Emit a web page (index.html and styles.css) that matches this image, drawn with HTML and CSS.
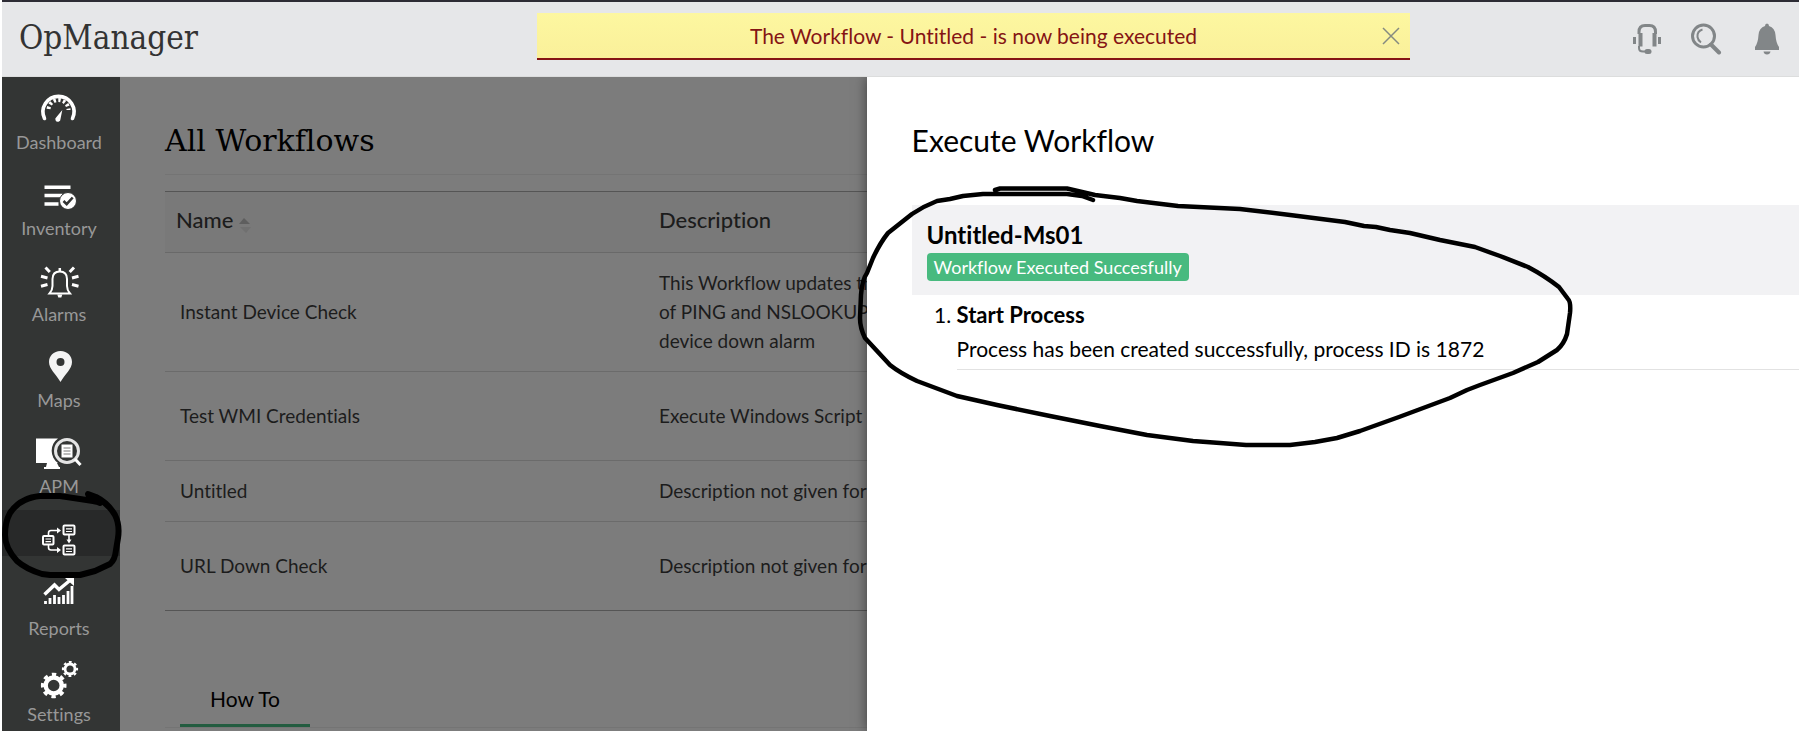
FILE: index.html
```html
<!DOCTYPE html>
<html lang="en">
<head>
<meta charset="utf-8">
<title>OpManager - All Workflows</title>
<link rel="stylesheet" href="styles.css">
</head>
<body>
<div class="app">
  <header class="topbar">
    <div class="brand">OpManager</div>
    <div class="toast" role="status">
      <span class="toast-text">The Workflow - Untitled - is now being executed</span>
      <button class="toast-close" aria-label="Close">
        <svg width="18" height="18" viewBox="0 0 18 18" fill="none" stroke="#858a80" stroke-width="1.5"><path d="M1 1 17 17M17 1 1 17"/></svg>
      </button>
    </div>
    <div class="tools">
      <button class="tool" aria-label="Support">
        <svg width="32" height="32" viewBox="0 0 32 32" fill="none" stroke="#828688">
          <path d="M10 11V9Q10 2.500 16 2.500H20.500Q26.500 2.500 26.500 9v2" stroke-width="3"/>
          <path d="M11.500 10v13.500M25.500 10v13.500" stroke-width="4"/>
          <path d="M5.500 14v7M30.500 14v7" stroke-width="3"/>
          <path d="M10 23v2q0 3.500 4 3.500h4" stroke-width="2"/>
          <path d="M18 28.500h2" stroke-width="5" stroke-linecap="round"/>
        </svg>
      </button>
      <button class="tool" aria-label="Search">
        <svg width="32" height="32" viewBox="0 0 32 32" fill="none" stroke="#828688">
          <circle cx="13.500" cy="13" r="11" stroke-width="3"/>
          <path d="M12.500 6.500Q7 8 7.500 14q.5 3.500 3.500 5.500" stroke-width="2"/>
          <path d="M21 21.500 29 29.500" stroke-width="4" stroke-linecap="round"/>
        </svg>
      </button>
      <button class="tool" aria-label="Notifications">
        <svg width="32" height="32" viewBox="0 0 32 32" fill="#828688">
          <path d="M14 3q0-2.500 2-2.500T18 3q6 2 6.500 9 .5 8 3.500 12v3H4v-3q3-4 3.500-12Q8 5 14 3ZM12.500 28.500h7q-.5 3-3.500 3t-3.500-3Z"/>
        </svg>
      </button>
    </div>
  </header>

  <div class="body">
    <nav class="sidebar">
      <a class="nav-item" href="#">
        <svg class="nav-icon" viewBox="0 0 48 44" fill="none" stroke="#fff">
          <path d="M9.500 32.500A15.500 15.500 0 1 1 37.500 32.500" stroke-width="3.600" stroke-linecap="round"/>
          <path d="M13.500 24A10 10 0 0 1 33.500 24" stroke-width="4" stroke-dasharray="2.400 2.400" stroke-dashoffset="-1"/>
          <path d="M27.300 24 21.500 31a2.600 2.600 0 1 0 4 2Z" fill="#fff" stroke="none"/>
        </svg>
        <span>Dashboard</span>
      </a>
      <a class="nav-item" href="#">
        <svg class="nav-icon" viewBox="0 0 48 44" fill="none" stroke="#fff">
          <path d="M9.500 15.300h26M9.500 23.500h18M9.500 32h14" stroke-width="3.500"/>
          <circle cx="33" cy="29" r="8.500" fill="#fff" stroke="#333534" stroke-width="1"/>
          <path d="m28.500 29 3.200 3.200 6-6.700" stroke="#333534" stroke-width="2.600"/>
        </svg>
        <span>Inventory</span>
      </a>
      <a class="nav-item" href="#">
        <svg class="nav-icon" viewBox="0 0 48 44" fill="none" stroke="#fff">
          <path d="M14.500 35.500h20.500Q32 32 32 28v-7q0-7.500-7.200-7.500T17.500 21v7q0 4-3 7.500Z" stroke-width="2"/>
          <path d="M24.800 10v4" stroke-width="2.500"/><path d="M22.300 36.500h5l-1 3h-3Z" fill="#fff" stroke="none"/>
          <path d="m10.500 9.500 4.300 4.500M6 18.300l6.500 1.700M6 28.200l6.500-1.700M39 9.500 34.700 14M43.500 18.300 37 20M43.500 28.200 37 26.500" stroke-width="3"/>
        </svg>
        <span>Alarms</span>
      </a>
      <a class="nav-item" href="#">
        <svg class="nav-icon" viewBox="0 0 48 44" fill="#f4f4f4">
          <path fill-rule="evenodd" d="M25.500 7C18.500 7 14 12 14 18c0 7 7 12 11.500 20C30 30 37 25 37 18c0-6-4.500-11-11.500-11Zm0 7a4 4 0 1 1 0 8 4 4 0 0 1 0-8Z"/>
        </svg>
        <span>Maps</span>
      </a>
      <a class="nav-item" href="#">
        <svg class="nav-icon" viewBox="0 0 48 44" fill="none" stroke="#fff">
          <path d="M1 8.500h22a15 15 0 0 0 0 24.500l-1 0 2 4h1v2H9v-2h2l1-4H1Z" fill="#fff" stroke="none"/>
          <circle cx="32" cy="21" r="11.500" fill="#333534" stroke="#e4e4e4" stroke-width="3"/>
          <path d="m40 29 5.500 6" stroke-width="3"/>
          <path d="M26.500 14.500h11v13h-11Z" fill="#fff" stroke="none"/>
          <path d="M28.500 18h7M28.500 21h7M28.500 24h7" stroke="#777" stroke-width="1"/>
        </svg>
        <span>APM</span>
      </a>
      <a class="nav-item nav-item-active" href="#" aria-label="Workflow">
        <svg class="nav-icon-active" viewBox="0 0 48 46" fill="none" stroke="#fff" stroke-width="2">
          <rect x="28.500" y="15.500" width="11" height="9" rx="1"/><rect x="28.500" y="35.500" width="11" height="9" rx="1"/><rect x="8" y="26" width="10.500" height="8.500" rx="1"/>
          <path d="M31 18.800h6M31 21.500h6M31 38.800h6M31 41.500h6M10.500 29h5.500M10.500 31.700h5.500" stroke-width="1.200"/>
          <path d="M13.500 26v-3q0-2.500 2.500-2.500h8M13.500 35v2.500q0 2.500 2.500 2.500h8M34 25v6" stroke-width="1.600"/>
          <path d="m22 17.500 4 3-4 3ZM22 37l4 3-4 3ZM31.500 29.500h5L34 33.500Z" fill="#fff" stroke="none"/>
        </svg>
      </a>
      <a class="nav-item" href="#">
        <svg class="nav-icon" viewBox="0 0 48 44" fill="none" stroke="#fff">
          <path d="M9.500 22.500 19.500 13l4.500 4.500L36 7.500" stroke-width="3.500"/><path d="M30 6h9v8Z" fill="#fff" stroke="none"/>
          <path d="M10.500 32v-3M15 32v-6M19.500 32v-9M24 32v-7M28.500 32v-9M33 32v-13M37 32v-18" stroke-width="2.800"/>
        </svg>
        <span>Reports</span>
      </a>
      <a class="nav-item" href="#">
        <svg class="nav-icon" viewBox="0 0 48 44" fill="none" stroke="#fff">
          <circle cx="18.700" cy="27.500" r="8" stroke-width="4.400"/>
          <circle cx="18.700" cy="27.500" r="11" stroke-width="3.600" stroke-dasharray="4.320 4.320" stroke-dashoffset="2.160"/>
          <circle cx="35" cy="11" r="5" stroke-width="2.800"/>
          <circle cx="35" cy="11" r="7" stroke-width="2.200" stroke-dasharray="2.750 2.750" stroke-dashoffset="1.370"/>
        </svg>
        <span>Settings</span>
      </a>
    </nav>

    <main class="content">
      <h1 class="page-title">All Workflows</h1>
      <table class="workflows">
        <thead>
          <tr>
            <th class="col-name">Name <svg class="sort" width="12" height="16" viewBox="0 0 12 16"><path d="M0 7 5 1l6 6Z" fill="#5e5e5e"/><path d="M1 10h11l-5 6Z" fill="#707070"/></svg></th>
            <th>Description</th>
          </tr>
        </thead>
        <tbody>
          <tr class="row-tall"><td>Instant Device Check</td><td>This Workflow updates the<br>of PING and NSLOOKUP<br>device down alarm</td></tr>
          <tr class="row-medium"><td>Test WMI Credentials</td><td>Execute Windows Script</td></tr>
          <tr><td>Untitled</td><td>Description not given for</td></tr>
          <tr class="row-medium"><td>URL Down Check</td><td>Description not given for</td></tr>
        </tbody>
      </table>
      <div class="tabs"><button class="tab">How To</button></div>
    </main>

    <section class="drawer">
      <h2 class="drawer-title">Execute Workflow</h2>
      <div class="result-head">
        <h3 class="result-name">Untitled-Ms01</h3>
        <span class="badge">Workflow Executed Succesfully</span>
      </div>
      <ol class="steps">
        <li><strong class="step-name">Start Process</strong><p class="step-text">Process has been created successfully, process ID is 1872</p></li>
      </ol>
    </section>
  </div>

  <svg class="ink" width="1799" height="731" viewBox="0 0 1799 731" fill="none" stroke="#000" stroke-linecap="round" stroke-linejoin="round">
    <path stroke-width="4.500" d="M995 190 1000 188.500H1067L1095 195 1120 198 1137 201 1178 206 1240 209 1290 215 1345 222 1364 226 1376 227 1390 230 1410 233 1440 240 1475 247 1500 256 1528 267Q1545 276 1559 287L1568 299Q1571 302 1570 313L1567 334Q1564 344 1557 350L1538 362 1513 373 1480 385 1467 390 1450 398 1399 417 1360 431 1337 438 1315 442 1290 445H1246L1220 443 1193 441 1147 435 1100 426 1050 416 997 405 957 396 917 381Q900 373 890 365L865 338Q860 328 860 318L861 295Q862 280 867 273L873 258Q880 243 888 233L912 214Q924 206 937 201L950 199 963 196 983 194H1067L1082 196 1093 200"/>
    <path stroke-width="6" d="M98 502 93 501 80 499 60 496H40Q31 497 25 500 16 504 10 513 5 522 5 535 5 548 17 561 26 569 42 574L50 575H80L95 571 110 564Q115 560 116 550L118 538Q120 525 115 515 108 503 96 497L88 494 90 499 100 503"/>
  </svg>
</div>
</body>
</html>
```

FILE: styles.css
```css
* { box-sizing: border-box; }

body {
  margin: 0;
  background: #fff;
  color: #000;
  font-family: Lato, "Liberation Sans", sans-serif;
  font-variant-ligatures: no-common-ligatures;
}

button {
  border: 0;
  padding: 0;
  background: none;
  font: inherit;
  font-variant-ligatures: inherit;
  cursor: pointer;
}

a { text-decoration: none; }

.app {
  position: relative;
  display: flex;
  flex-direction: column;
  height: 100vh;
  padding-left: 2px;
  overflow: hidden;
}

/* Top bar */
.topbar {
  display: grid;
  grid-template-columns: 535px minmax(0, 1fr) 389px;
  flex: none;
  height: 77px;
  border-top: 2px solid #2d2c35;
  border-bottom: 1px solid #dcdddd;
  background: #e6e7e9;
}

.brand {
  padding: 12px 0 0 17px;
  color: #333;
  font-family: "Roboto Slab", "DejaVu Serif Condensed", "DejaVu Serif", serif;
  font-size: 33px;
  font-weight: 200;
  line-height: 48px;
}

.toast {
  display: flex;
  align-items: center;
  height: 47px;
  margin-top: 11px;
  padding: 0 10px;
  border-bottom: 2px solid #851414;
  background: linear-gradient(#fdf7a0, #faf09a);
  color: #851414;
  font-size: 21px;
}

.toast-text { flex: 1; padding-left: 18px; text-align: center; }
.toast-close { width: 18px; height: 18px; }
.toast-close svg { display: block; }

.tools {
  display: flex;
  justify-content: flex-end;
  gap: 29px;
  padding: 21px 16px 0 0;
}

.tool { width: 32px; height: 32px; }
.tool svg { display: block; }

/* Page body */
.body {
  position: relative;
  display: flex;
  flex: 1;
  min-height: 0;
}

.sidebar {
  display: flex;
  flex: none;
  flex-direction: column;
  width: 118px;
  background: #333534;
}

.nav-item {
  display: flex;
  flex: none;
  flex-direction: column;
  align-items: center;
  height: 86px;
  padding: 9px 4px 0 0;
  color: #989898;
  font-size: 18px;
  line-height: 24px;
}

.nav-icon { width: 48px; height: 44px; }

.nav-item-active {
  height: 46px;
  margin: 3px 0 7px;
  padding-top: 0;
  background: #282929;
}

.nav-icon-active { width: 48px; height: 46px; }

.content {
  flex: 1;
  min-width: 0;
  padding: 40px 0 0 45px;
  background: #7c7c7c;
}

.page-title {
  margin: 0 0 16px;
  padding-bottom: 9px;
  border-bottom: 1px solid #747474;
  font-family: "Roboto Slab", "DejaVu Serif", serif;
  font-size: 30px;
  font-weight: 400;
  line-height: 48px;
}

.workflows {
  width: 100%;
  border-collapse: collapse;
  border-top: 1px solid #555;
  border-bottom: 1px solid #555;
  color: #1c1c1c;
  font-size: 19px;
  line-height: 29px;
  text-align: left;
  white-space: nowrap;
}

.workflows th {
  height: 61px;
  padding: 0 0 6px;
  border-bottom: 1px solid #696969;
  background: #797979;
  font-size: 22px;
  font-weight: 500;
}

.workflows .col-name { width: 494px; padding-left: 11px; }
.workflows td { height: 61px; padding: 0 0 2px; border-bottom: 1px solid #6b6b6b; }
.workflows td:first-child { padding-left: 15px; }
.workflows tbody tr:last-child td { border-bottom-color: #555; }
.workflows .row-tall td { height: 119px; }
.workflows .row-medium td { height: 89px; }
.sort { margin-bottom: -5px; }

.tabs {
  margin-top: 65px;
  padding-left: 15px;
  border-bottom: 1px solid #747474;
}

.tab {
  display: block;
  width: 130px;
  height: 51px;
  padding-bottom: 4px;
  border-bottom: 3px solid #235c40;
  font-size: 21px;
}

/* Side drawer laid over the page */
.drawer {
  position: absolute;
  inset: 0 0 0 auto;
  width: calc(52% - 2px);
  padding: 39px 0 0 45px;
  background: #fff;
  box-shadow: 0 0 12px rgba(0, 0, 0, 0.5);
  clip-path: inset(0 0 0 -20px);
}

.drawer-title {
  margin: 0 0 41px;
  font-size: 30px;
  font-weight: 400;
  line-height: 48px;
}

.result-head {
  padding: 14px 15px;
  background: #f2f2f4;
}

.result-name {
  margin: 0 0 2px;
  font-size: 24px;
  font-weight: 700;
  line-height: 32px;
}

.badge {
  display: inline-block;
  padding: 0 7px;
  border-radius: 4px;
  background: #48ba7f;
  color: #fff;
  font-size: 18px;
  line-height: 28px;
}

.steps {
  margin: 0;
  padding: 3px 0 0 45px;
  font-size: 21px;
  line-height: 34px;
}

.steps li { border-bottom: 1px solid #e2e2e2; padding-bottom: 3px; }
.step-name { font-size: 22px; font-weight: 700; }
.step-text { margin: 0; }

/* Freehand marks drawn over the page */
.ink {
  position: absolute;
  inset: 0 auto auto 0;
  pointer-events: none;
}
```
